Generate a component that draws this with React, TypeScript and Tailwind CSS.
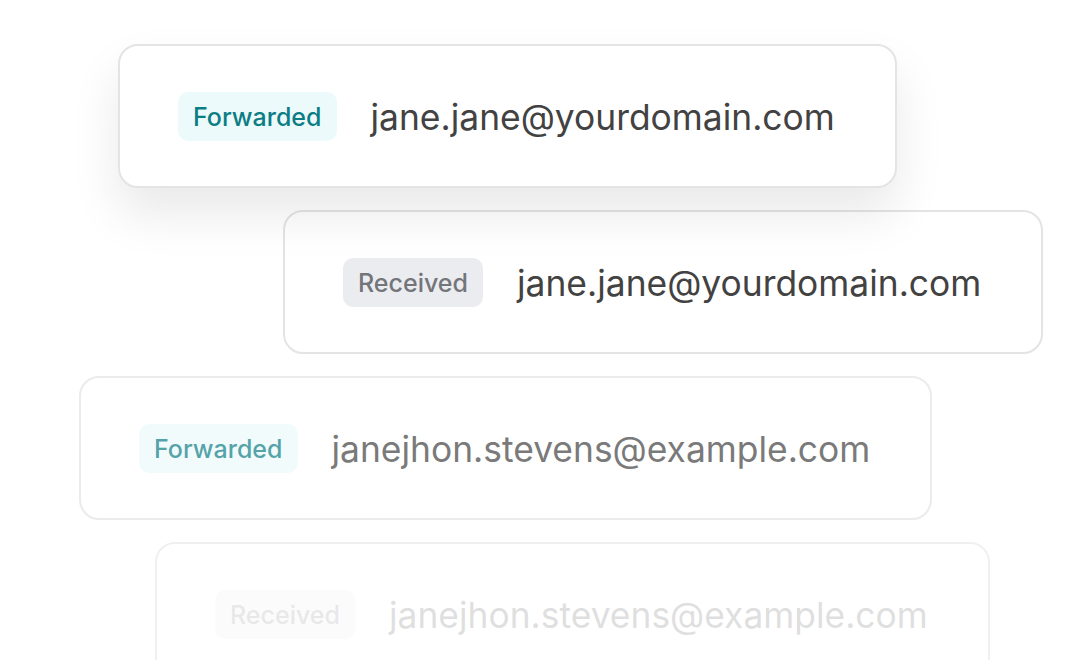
const rows = [
  { label: 'Forwarded', email: 'jane.jane@yourdomain.com', card: 'ml-[118px] relative z-10 border-[#e4e4e6] shadow-[0_26px_50px_rgba(0,0,0,0.09)]', inner: '' },
  { label: 'Received', email: 'jane.jane@yourdomain.com', card: 'ml-[283px] border-[#e4e4e6]', inner: '' },
  { label: 'Forwarded', email: 'janejhon.stevens@example.com', card: 'ml-[79px] border-[#ebebeb]', inner: 'opacity-70' },
  { label: 'Received', email: 'janejhon.stevens@example.com', card: 'ml-[155px] border-[#f0f0f0]', inner: 'opacity-[0.16]' },
]

function Badge({ label }: { label: string }) {
  const forwarded = label === 'Forwarded'
  return (
    <span
      className={`flex h-[49px] items-center rounded-[10px] px-[15px] pt-[3px] text-[25px] font-medium ${
        forwarded ? 'bg-[#edfafb] text-[#0b7d84]' : 'bg-[#ebecef] text-[#73757b]'
      }`}
    >
      {label}
    </span>
  )
}

export default function App() {
  return (
    <div
      className="flex h-[660px] w-[1080px] flex-col items-start gap-[22px] overflow-hidden bg-white pt-[44px]"
      style={{ fontFamily: 'Inter, "Noto Sans", sans-serif' }}
    >
      {rows.map((row, i) => (
        <div
          key={i}
          className={`flex h-[144px] shrink-0 items-center rounded-[20px] border-2 bg-white pl-[58px] pr-[60px] ${row.card}`}
        >
          <div className={`flex items-center gap-[34px] ${row.inner}`}>
            <Badge label={row.label} />
            <span className="pt-[4px] text-[35.4px] leading-none text-[#424242]">{row.email}</span>
          </div>
        </div>
      ))}
    </div>
  )
}
